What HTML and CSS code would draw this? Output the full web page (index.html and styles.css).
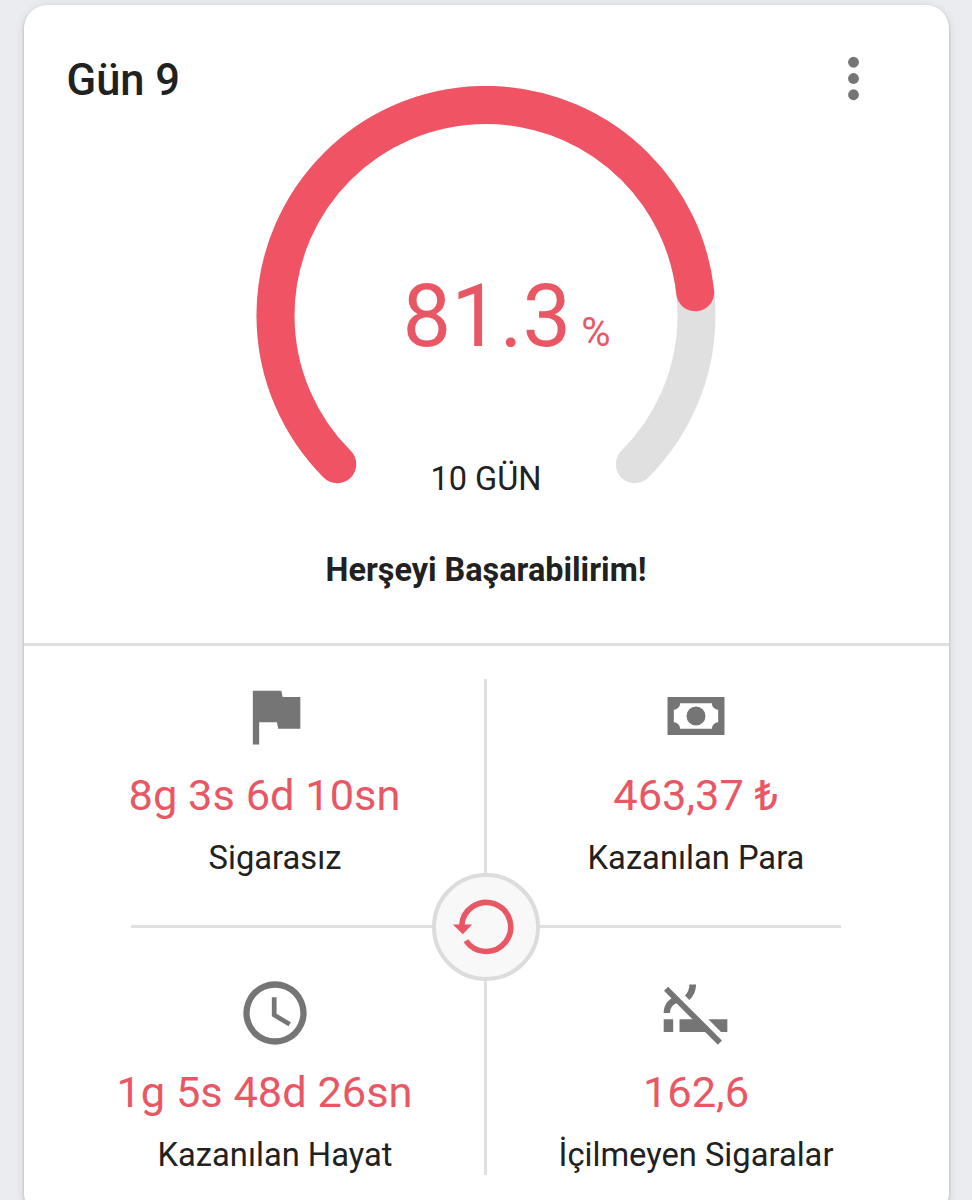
FILE: index.html
```html
<!DOCTYPE html>
<html lang="tr">
<head>
<meta charset="UTF-8" />
<meta name="viewport" content="width=device-width, initial-scale=1" />
<title>Gün 9</title>
<link rel="stylesheet" href="styles.css">
</head>
<body>

<main class="card">
  <section class="progress">
    <h1>Gün 9</h1>

    <div class="gauge">
      <svg class="gauge-ring" viewBox="0 0 460 400">
        <path class="track" d="M81.2 378.3A210.5 210.5 0 1 1 378.8 378.3" />
        <path class="bar" pathLength="100" stroke-dasharray="81 200" d="M81.2 378.3A210.5 210.5 0 1 1 378.8 378.3" />
      </svg>
      <div class="gauge-text">
        <div class="percent">81.3<span>%</span></div>
        <div class="target">10 GÜN</div>
      </div>
    </div>

    <button class="menu" aria-label="Menü">
      <svg viewBox="0 0 24 24"><circle cx="12" cy="6" r="2" /><circle cx="12" cy="12" r="2" /><circle cx="12" cy="18" r="2" /></svg>
    </button>

    <p class="motto">Herşeyi Başarabilirim!</p>
  </section>

  <section class="stats">
    <div class="stat time">
      <svg viewBox="0 0 24 24"><path d="M14.4 6L14 4H5v17h2v-7h5.6l.4 2h7V6z" /></svg>
      <strong>8g 3s 6d 10sn</strong>
      <span>Sigarasız</span>
    </div>

    <div class="stat">
      <svg viewBox="0 0 24 24"><path fill-rule="evenodd" d="M3 6h18v12H3zM7 8a2 2 0 0 1-2 2v4a2 2 0 0 1 2 2h10a2 2 0 0 1 2-2v-4a2 2 0 0 1-2-2zM12 9a3 3 0 1 1 0 6 3 3 0 0 1 0-6z" /></svg>
      <strong>463,37 ₺</strong>
      <span>Kazanılan Para</span>
    </div>

    <div class="stat time">
      <svg viewBox="0 0 24 24"><path d="M12 2a10 10 0 1 0 0 20 10 10 0 0 0 0-20zm0 18a8 8 0 1 1 0-16 8 8 0 0 1 0 16zm.5-13H11v6l5.25 3.15.75-1.23-4.5-2.67z" /></svg>
      <strong>1g 5s 48d 26sn</strong>
      <span>Kazanılan Hayat</span>
    </div>

    <div class="stat">
      <svg viewBox="0 0 24 24">
        <path d="M1.8 14h3v4h-3zM6.8 14h4.5l4 4H6.8zM15.9 14h6v4h-2z" />
        <path d="M3.2 3.7L20.2 20.7 18.9 22 1.9 5z" />
        <path d="M9.9 3H12c0 2-.8 3.7-2.1 4.9L8.5 6.5C9.4 5.6 9.9 4.4 9.9 3zM1.8 12c0-2.2 1.1-4 2.9-4.9l1.7 1.7C4.8 9.1 3.8 10.4 3.8 12z" />
      </svg>
      <strong>162,6</strong>
      <span>İçilmeyen Sigaralar</span>
    </div>

    <button class="reset" aria-label="Sıfırla">
      <svg viewBox="0 0 72 72">
        <path class="arc" d="M11.7 35A24.5 24.5 0 1 1 15.9 49.7" />
        <path class="arrow" d="M2.8 33.5h19.4l-9.4 9.7z" />
      </svg>
    </button>
  </section>
</main>

</body>
</html>
```

FILE: styles.css
```css
* {
  box-sizing: border-box;
}
body {
  margin: 0;
  height: 1200px;
  overflow: hidden;
  background: #ebecf0;
  color: #212121;
  font-family: Roboto, sans-serif;
}
h1, p {
  margin: 0;
}
button {
  padding: 0;
  border: none;
  background: none;
}
.card {
  width: 925px;
  height: 1212px;
  margin: 5px 0 0 23.5px;
  background: #fff;
  border-radius: 23px;
  box-shadow: 0 1px 2px rgba(0, 0, 0, 0.3), 0 2px 10px rgba(0, 0, 0, 0.12);
}

/* top half: day, gauge, motto */
.progress {
  display: grid;
  grid-template-columns: 1fr 460px 1fr;
  align-items: start;
  align-content: start;
  height: 641px;
  border-bottom: 3px solid #e0e0e0;
}
h1 {
  padding: 50px 0 0 43px;
  font-size: 43.5px;
  font-weight: 500;
  line-height: 51px;
}
.gauge {
  display: grid;
  grid-template-rows: 400px;
  margin-top: 81px;
}
.gauge-ring, .gauge-text {
  grid-area: 1 / 1;
}
.gauge-ring {
  width: 460px;
  height: 400px;
}
.gauge-ring path {
  fill: none;
  stroke-width: 38;
  stroke-linecap: round;
}
.gauge-ring .track {
  stroke: #e0e0e0;
}
.gauge-ring .bar {
  stroke: #f05464;
}
.gauge-text {
  padding-top: 179px;
  text-align: center;
}
.percent {
  height: 104px;
  padding-left: 41px;
  color: #e95765;
  font-size: 86.5px;
  line-height: 104px;
}
.percent span {
  margin-left: 10px;
  font-size: 40px;
}
.target {
  margin-top: 90px;
  font-size: 32.5px;
  line-height: 40px;
}
.menu {
  justify-self: end;
  margin: 41px 62.5px 0 0;
  height: 65px;
}
.menu svg {
  width: 65px;
  height: 65px;
  fill: #757575;
}
.motto {
  grid-column: 1 / -1;
  margin-top: 64px;
  text-align: center;
  font-size: 32.4px;
  font-weight: 700;
  line-height: 40px;
}

/* bottom half: four numbers around the reset button */
.stats {
  position: relative;
  display: grid;
  grid-template-columns: 421px 421px;
  grid-auto-rows: 297px;
  justify-content: center;
  padding: 32px 1px 0 0;
}
.stats::before, .stats::after {
  content: "";
  position: absolute;
  background: #e0e0e0;
}
.stats::before {
  top: 33px;
  left: 460.5px;
  width: 3px;
  height: 496px;
}
.stats::after {
  top: 279px;
  left: 107.5px;
  width: 710px;
  height: 3px;
}
.stat {
  display: flex;
  flex-direction: column;
  align-items: center;
}
.stat svg {
  width: 76px;
  height: 76px;
  fill: #757575;
}
.stat strong {
  margin-top: 16px;
  color: #e95765;
  font-size: 43.4px;
  font-weight: 400;
  line-height: 52px;
}
.time strong {
  margin-right: 21px;
}
.stat span {
  margin-top: 16px;
  font-size: 32.7px;
  line-height: 40px;
}
.reset {
  position: absolute;
  z-index: 1;
  top: 226.5px;
  left: 408.5px;
  width: 108px;
  height: 108px;
  display: flex;
  align-items: center;
  justify-content: center;
  background: #f8f8f8;
  border: 4px solid #dcdcdc;
  border-radius: 50%;
}
.reset svg {
  width: 72px;
  height: 72px;
}
.reset .arc {
  fill: none;
  stroke: #e95765;
  stroke-width: 5.6;
}
.reset .arrow {
  fill: #e95765;
}
```
